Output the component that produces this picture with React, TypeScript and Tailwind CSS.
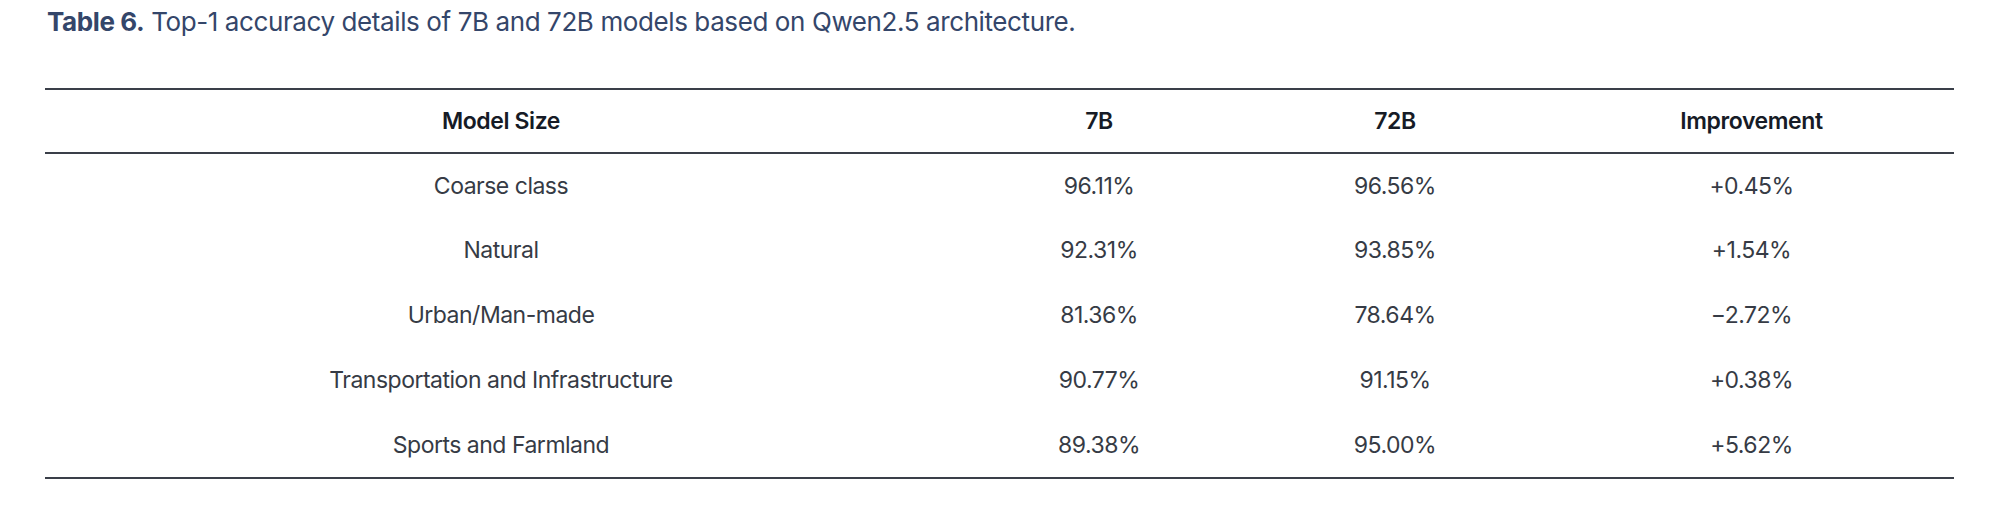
import React from 'react';

// Rows of the accuracy table
const rows = [
  { name: 'Coarse class', b7: '96.11%', b72: '96.56%', diff: '+0.45%' },
  { name: 'Natural', b7: '92.31%', b72: '93.85%', diff: '+1.54%' },
  { name: 'Urban/Man-made', b7: '81.36%', b72: '78.64%', diff: '−2.72%' },
  { name: 'Transportation and Infrastructure', b7: '90.77%', b72: '91.15%', diff: '+0.38%' },
  { name: 'Sports and Farmland', b7: '89.38%', b72: '95.00%', diff: '+5.62%' },
];

const App = () => {
  return (
    <div
      className="w-[1999px] h-[511px] bg-white"
      style={{ fontFamily: 'Inter, "Liberation Sans", sans-serif' }}
    >
      <p className="pl-[47px] pt-[6px] text-[26px] leading-[32px] text-[#34466a] tracking-[-0.4px]">
        <span className="font-bold">Table 6.</span> Top-1 accuracy details of 7B and 72B models based on Qwen2.5 architecture.
      </p>

      <div className="px-[45px] pt-[50px]">
        <table className="w-full border-collapse table-fixed">
          <colgroup>
            <col className="w-[912px]" />
            <col className="w-[284px]" />
            <col className="w-[308px]" />
            <col />
          </colgroup>
          <thead>
            <tr className="border-t-2 border-b-2 border-[#3a3f49]">
              <th className="h-[64px] text-[23px] font-semibold text-[#161b26] tracking-[-0.4px]">Model Size</th>
              <th className="h-[64px] text-[23px] font-semibold text-[#161b26] tracking-[-0.4px]">7B</th>
              <th className="h-[64px] text-[23px] font-semibold text-[#161b26] tracking-[-0.4px]">72B</th>
              <th className="h-[64px] text-[23px] font-semibold text-[#161b26] tracking-[-0.4px]">Improvement</th>
            </tr>
          </thead>
          <tbody className="border-b-2 border-[#3a3f49]">
            {rows.map((row) => (
              <tr key={row.name} className="h-[65px] text-[23px] text-[#363b45] text-center tracking-[-0.5px]">
                <td>{row.name}</td>
                <td>{row.b7}</td>
                <td>{row.b72}</td>
                <td>{row.diff}</td>
              </tr>
            ))}
          </tbody>
        </table>
      </div>
    </div>
  );
};

export default App;
